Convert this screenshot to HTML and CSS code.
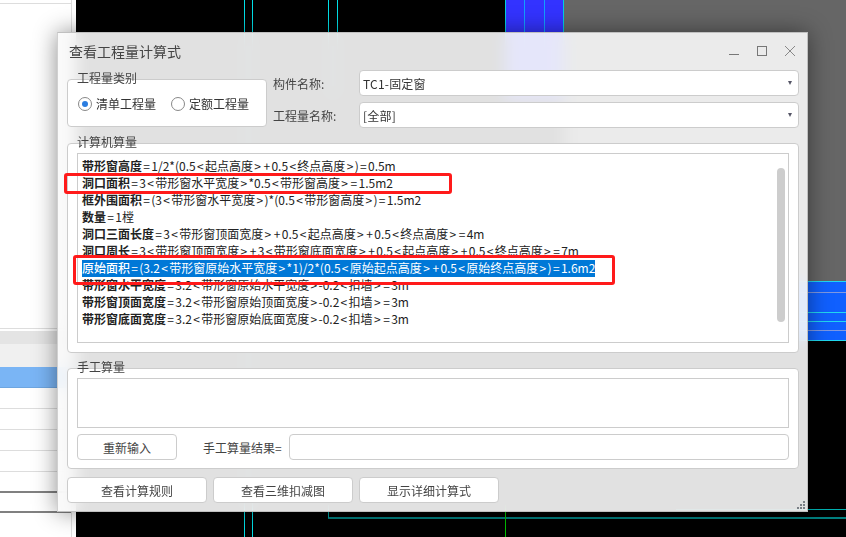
FILE: index.html
```html
<!DOCTYPE html>
<html lang="zh-CN">
<head>
    <meta charset="UTF-8">
    <title>查看工程量计算式</title>
    <link rel="stylesheet" href="styles.css">
</head>
<body>
    <!-- Left property panel -->
    <div class="side-panel">
        <div class="side-top"></div>
        <div class="side-row side-head"></div>
        <div class="side-row side-sub"></div>
        <div class="side-row side-active"></div>
        <div class="side-row"></div>
        <div class="side-row"></div>
        <div class="side-row"></div>
        <div class="side-row"></div>
        <div class="side-row side-last"></div>
        <div class="side-row side-end"></div>
    </div>

    <!-- CAD drawing behind the dialog -->
    <div class="cad">
        <div class="gray-area"></div>
        <div class="blue-strip"></div>
        <div class="strip-line l1"></div>
        <div class="strip-line l2"></div>
        <div class="blue-band"></div>
        <div class="band-line b1"></div>
        <div class="band-line b2 dim"></div>
        <div class="band-line b3"></div>
        <div class="band-line b4"></div>
        <div class="band-line b5 dim"></div>
        <div class="band-line b6"></div>
        <div class="cyan v1"></div>
        <div class="cyan v2"></div>
        <div class="cyan v3"></div>
        <div class="cyan v4"></div>
        <div class="teal-h t1"></div>
        <div class="teal-h t2"></div>
        <div class="teal-v"></div>
        <div class="green-v"></div>
    </div>

    <div class="dialog">
        <div class="title-bar">
            <div class="title">查看工程量计算式</div>
            <div class="win-controls">
                <svg width="10" height="10" viewBox="0 0 10 10"><path d="M0 8.5H10" stroke="#777" fill="none"/></svg>
                <svg width="10" height="10" viewBox="0 0 10 10"><rect x="0.5" y="0.5" width="9" height="9" stroke="#777" fill="none"/></svg>
                <svg width="10" height="10" viewBox="0 0 10 10"><path d="M0 0L10 10M10 0L0 10" stroke="#888" fill="none"/></svg>
            </div>
        </div>

        <div class="top-row">
            <div class="group type-group">
                <div class="legend">工程量类别</div>
                <div class="radio-row">
                    <span class="radio checked"></span><span class="radio-text">清单工程量</span>
                    <span class="radio"></span><span class="radio-text">定额工程量</span>
                </div>
            </div>
            <div class="combo-col">
                <div class="combo-row">
                    <label>构件名称:</label>
                    <div class="combo"><span>TC1-固定窗</span><i class="arrow"></i></div>
                </div>
                <div class="combo-row">
                    <label>工程量名称:</label>
                    <div class="combo"><span>[全部]</span><i class="arrow"></i></div>
                </div>
            </div>
        </div>

        <div class="group calc-group">
            <div class="legend">计算机算量</div>
            <div class="calc-list">
                <div class="calc-line"><b>带形窗高度</b><i>=</i>1/2*(0.5<i>&lt;</i>起点高度<i>&gt;</i><i>+</i>0.5<i>&lt;</i>终点高度<i>&gt;</i>)<i>=</i>0.5m</div>
                <div class="calc-line"><b>洞口面积</b><i>=</i>3<i>&lt;</i>带形窗水平宽度<i>&gt;</i>*0.5<i>&lt;</i>带形窗高度<i>&gt;</i><i>=</i>1.5m2</div>
                <div class="calc-line"><b>框外围面积</b><i>=</i>(3<i>&lt;</i>带形窗水平宽度<i>&gt;</i>)*(0.5<i>&lt;</i>带形窗高度<i>&gt;</i>)<i>=</i>1.5m2</div>
                <div class="calc-line"><b>数量</b><i>=</i>1樘</div>
                <div class="calc-line"><b>洞口三面长度</b><i>=</i>3<i>&lt;</i>带形窗顶面宽度<i>&gt;</i><i>+</i>0.5<i>&lt;</i>起点高度<i>&gt;</i><i>+</i>0.5<i>&lt;</i>终点高度<i>&gt;</i><i>=</i>4m</div>
                <div class="calc-line"><b>洞口周长</b><i>=</i>3<i>&lt;</i>带形窗顶面宽度<i>&gt;</i><i>+</i>3<i>&lt;</i>带形窗底面宽度<i>&gt;</i><i>+</i>0.5<i>&lt;</i>起点高度<i>&gt;</i><i>+</i>0.5<i>&lt;</i>终点高度<i>&gt;</i><i>=</i>7m</div>
                <div class="calc-line selected"><b>原始面积</b><i>=</i>(3.2<i>&lt;</i>带形窗原始水平宽度<i>&gt;</i>*1)/2*(0.5<i>&lt;</i>原始起点高度<i>&gt;</i><i>+</i>0.5<i>&lt;</i>原始终点高度<i>&gt;</i>)<i>=</i>1.6m2</div>
                <div class="calc-line"><b>带形窗水平宽度</b><i>=</i>3.2<i>&lt;</i>带形窗原始水平宽度<i>&gt;</i>-0.2<i>&lt;</i>扣墙<i>&gt;</i><i>=</i>3m</div>
                <div class="calc-line"><b>带形窗顶面宽度</b><i>=</i>3.2<i>&lt;</i>带形窗原始顶面宽度<i>&gt;</i>-0.2<i>&lt;</i>扣墙<i>&gt;</i><i>=</i>3m</div>
                <div class="calc-line"><b>带形窗底面宽度</b><i>=</i>3.2<i>&lt;</i>带形窗原始底面宽度<i>&gt;</i>-0.2<i>&lt;</i>扣墙<i>&gt;</i><i>=</i>3m</div>
                <div class="scroll-thumb"></div>
            </div>
        </div>

        <div class="group manual-group">
            <div class="legend">手工算量</div>
            <div class="manual-box"></div>
            <div class="manual-row">
                <button class="btn reset-btn">重新输入</button>
                <label>手工算量结果=</label>
                <div class="result-box"></div>
            </div>
        </div>

        <div class="bottom-row">
            <button class="btn">查看计算规则</button>
            <button class="btn">查看三维扣减图</button>
            <button class="btn">显示详细计算式</button>
        </div>

        <svg class="grip" width="8" height="8" viewBox="0 0 8 8" fill="#7a7f85">
            <rect x="6" y="0" width="2" height="2"/>
            <rect x="3" y="3" width="2" height="2"/>
            <rect x="6" y="3" width="2" height="2"/>
            <rect x="0" y="6" width="2" height="2"/>
            <rect x="3" y="6" width="2" height="2"/>
            <rect x="6" y="6" width="2" height="2"/>
        </svg>
    </div>

    <!-- Red annotation boxes -->
    <div class="mark mark-one"></div>
    <div class="mark mark-two"></div>
</body>
</html>
```

FILE: styles.css
```css
* {
    margin: 0;
    padding: 0;
    box-sizing: border-box;
}

body {
    width: 846px;
    height: 537px;
    overflow: hidden;
    position: relative;
    background-color: #fff;
    color: #333;
    font-family: "Noto Sans CJK SC", "Noto Sans", sans-serif;
    font-size: 12px;
}

/* Side panel */
.side-panel {
    width: 72px;
    height: 537px;
    border-right: 1px solid #ddd;
    display: flex;
    flex-direction: column;
}

.side-top {
    height: 326px;
    border-top: 1px solid #ddd;
    margin-top: 3px;
    margin-bottom: 2px;
    border-bottom: 1px solid #ddd;
}

.side-row {
    height: 21px;
    border-bottom: 1px solid #ddd;
    flex-shrink: 0;
}

.side-head {
    height: 13px;
    background-color: #e4e4e4;
    border: none;
}

.side-sub {
    height: 23px;
    background-color: #f0f0f0;
    border: none;
}

.side-active {
    height: 21px;
    background-color: #7ab5f5;
    border-bottom: 1px solid #6ea6e0;
}

.side-last {
    border-bottom: 2px solid #808080;
}

.side-end {
    height: 20px;
    border-bottom: 2px solid #808080;
}

/* CAD drawing */
.cad {
    position: absolute;
    left: 76px;
    top: 0;
    right: 0;
    bottom: 0;
    background-color: #000;
}

.gray-area {
    position: absolute;
    left: 488px;
    top: 0;
    right: 0;
    height: 281px;
    background-color: #666;
}

.blue-strip {
    position: absolute;
    left: 429px;
    top: 0;
    width: 59px;
    height: 100px;
    background-color: #3333ff;
    border-left: 1px solid #00d0e0;
    border-right: 1px solid #00d0e0;
}

.strip-line {
    position: absolute;
    top: 0;
    width: 1px;
    height: 100px;
    background-color: #10a0ff;
}

.l1 { left: 448px; }
.l2 { left: 468px; }

.blue-band {
    position: absolute;
    left: 488px;
    top: 281px;
    right: 0;
    height: 60px;
    background-color: #1060ff;
}

.band-line {
    position: absolute;
    left: 488px;
    right: 0;
    height: 1px;
    background-color: #20d8f0;
}

.band-line.dim { background-color: #8098e0; }
.b1 { top: 281px; }
.b2 { top: 292px; }
.b3 { top: 312px; }
.b4 { top: 321px; }
.b5 { top: 330px; }
.b6 { top: 340px; }

.cyan {
    position: absolute;
    top: 0;
    bottom: 0;
    width: 1px;
    background-color: #00e0e8;
}

.v1 { left: 168px; }
.v2 { left: 176px; }
.v3 { left: 252px; height: 100px; bottom: auto; }
.v4 { left: 261px; height: 100px; bottom: auto; }

.teal-h {
    position: absolute;
    right: 0;
    background-color: #007f7f;
}

.t1 { top: 509px; left: 600px; height: 1px; background-color: #00b0b0; }
.t2 { top: 517px; left: 252px; height: 2px; }

.teal-v {
    position: absolute;
    left: 252px;
    top: 505px;
    width: 1px;
    height: 13px;
    background-color: #00a0a0;
}

.green-v {
    position: absolute;
    left: 429px;
    top: 505px;
    bottom: 0;
    width: 1px;
    background-color: #00c000;
}

/* Dialog */
.dialog {
    position: absolute;
    left: 57px;
    top: 32px;
    width: 751px;
    height: 480px;
    padding: 0 8px 0 9px;
    background-color: rgba(250, 250, 250, 0.9);
    backdrop-filter: blur(8px);
    border: 1px solid #c0c0c0;
    border-left-color: #d0d0d0;
    box-shadow: 0 0 22px rgba(0, 0, 0, 0.45);
}

.title-bar {
    height: 37px;
    display: flex;
    justify-content: space-between;
    align-items: center;
    padding: 0 4px 4px 2px;
}

.title {
    font-size: 14px;
    color: #444;
    line-height: 18px;
    margin-top: 2px;
}

.win-controls {
    display: flex;
    gap: 18px;
    margin-top: 3px;
}

.win-controls svg {
    display: block;
}

.group {
    position: relative;
    background-color: #fff;
    border: 1px solid #ccc;
    border-radius: 4px;
}

.legend {
    position: absolute;
    left: 9px;
    top: -11px;
    line-height: 18px;
    color: #444;
}

.top-row {
    display: flex;
    height: 58px;
}

.type-group {
    width: 200px;
    height: 48px;
    margin-top: 9px;
}

.radio-row {
    display: flex;
    align-items: center;
    height: 47px;
    padding: 0 0 0 10px;
}

.radio {
    width: 14px;
    height: 14px;
    border: 1px solid #888;
    border-radius: 50%;
    margin-right: 4px;
    background-color: #fff;
    display: flex;
    align-items: center;
    justify-content: center;
}

.radio.checked::after {
    content: "";
    width: 6px;
    height: 6px;
    border-radius: 50%;
    background-color: #2b7de0;
}

.radio-text {
    width: 75px;
    white-space: nowrap;
}

.combo-col {
    flex: 1;
    display: flex;
    flex-direction: column;
    gap: 6px;
    margin-left: 6px;
}

.combo-row {
    display: flex;
    align-items: center;
    height: 26px;
}

.combo-row label {
    width: 86px;
    color: #444;
}

.combo {
    flex: 1;
    height: 26px;
    background-color: #fff;
    border: 1px solid #ccc;
    border-radius: 4px;
    padding: 0 6px 0 3px;
    display: flex;
    align-items: center;
    justify-content: space-between;
}

.combo span {
    letter-spacing: 0.2px;
}

.arrow {
    width: 0;
    height: 0;
    border-left: 2.5px solid transparent;
    border-right: 2.5px solid transparent;
    border-top: 4px solid #556;
}

.calc-group {
    height: 210px;
    margin-top: 15px;
    padding: 9px;
}

.calc-list {
    position: relative;
    height: 190px;
    border: 1px solid #ccc;
    background-color: #fff;
    padding-top: 4px;
    padding-left: 4px;
}

.calc-line {
    height: 17px;
    line-height: 16px;
    white-space: nowrap;
    color: #222;
    width: fit-content;
}

.calc-line b {
    font-weight: 700;
}

/* the operators sit wider apart than in this font */
.calc-line i {
    font-style: normal;
    padding: 0 1.3px;
}

.calc-line.selected {
    background-color: #0078d7;
    color: #fff;
}

.calc-line.selected b {
    font-weight: 500;
}

.scroll-thumb {
    position: absolute;
    right: 3px;
    top: 14px;
    width: 8px;
    height: 154px;
    background-color: #cdcdcd;
    border-radius: 4px;
}

.manual-group {
    height: 101px;
    margin-top: 15px;
    padding: 9px;
}

.manual-box {
    height: 50px;
    border: 1px solid #ccc;
    background-color: #fff;
}

.manual-row {
    display: flex;
    align-items: center;
    margin-top: 6px;
}

.manual-row label {
    margin-left: 26px;
    margin-right: 7px;
    white-space: nowrap;
    color: #444;
}

.result-box {
    flex: 1;
    height: 26px;
    border: 1px solid #ccc;
    border-radius: 4px;
    background-color: #fff;
}

.btn {
    width: 140px;
    height: 26px;
    background-color: #fff;
    border: 1px solid #ccc;
    border-radius: 4px;
    color: #444;
    font-family: inherit;
    font-size: 12px;
}

.reset-btn {
    width: 100px;
}

.bottom-row {
    display: flex;
    gap: 6px;
    margin-top: 8px;
}

.grip {
    position: absolute;
    right: 2px;
    bottom: 2px;
}

/* Red annotation boxes */
.mark {
    position: absolute;
    border: 3px solid #ff1a1a;
    border-radius: 3px;
}

.mark-one {
    left: 64px;
    top: 173px;
    width: 388px;
    height: 21px;
}

.mark-two {
    left: 73px;
    top: 255px;
    width: 542px;
    height: 30px;
}
```
